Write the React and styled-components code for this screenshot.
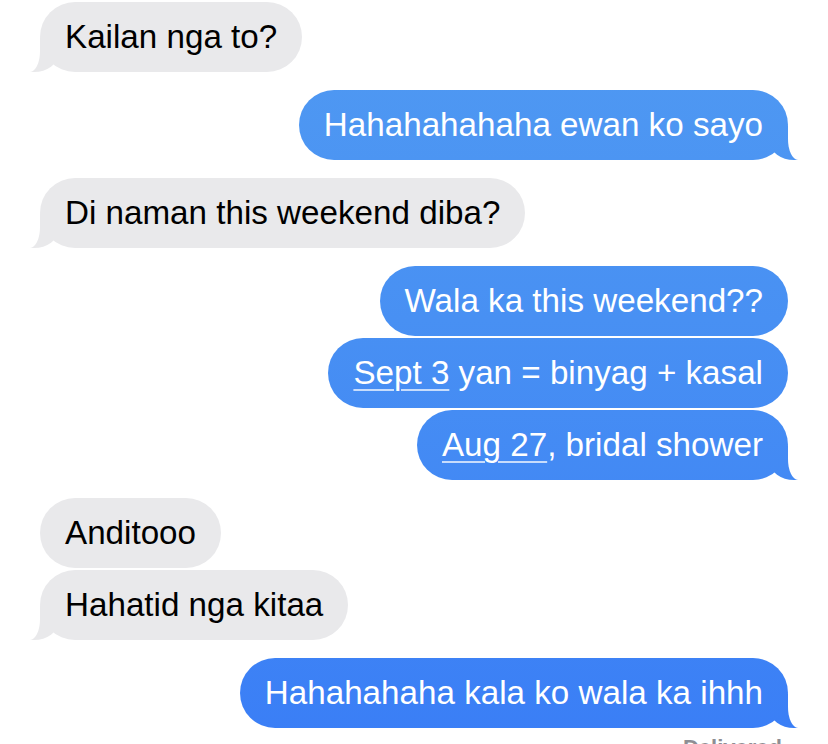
import React from "react";
import styled, { createGlobalStyle, css } from "styled-components";

const GlobalStyle = createGlobalStyle`
  html, body {
    margin: 0;
    background: #ffffff;
    overflow: hidden;
  }
`;

const BLUE = "linear-gradient(180deg, #509af2 0px, #4890f3 320px, #3a7ef6 744px) fixed";
const GREY = "#e9e9eb";

const Thread = styled.main`
  display: flex;
  flex-direction: column;
  gap: 18px;
  padding: 2px 40px 0;
  font-family: "Liberation Sans", Arial, sans-serif;
`;

const Group = styled.section`
  display: flex;
  flex-direction: column;
  gap: 2px;
  align-items: ${(p) => (p.$sent ? "flex-end" : "flex-start")};
`;

const sentTail = css`
  &::before {
    right: -12px;
    border-bottom-left-radius: 24px 18px;
    background: ${BLUE};
  }
  &::after {
    left: 100%;
    border-bottom-left-radius: 10px 21px;
  }
`;

const receivedTail = css`
  &::before {
    left: -12px;
    border-bottom-right-radius: 24px 18px;
    background: ${GREY};
  }
  &::after {
    right: 100%;
    border-bottom-right-radius: 10px 21px;
  }
`;

const Bubble = styled.div`
  position: relative;
  z-index: 0;
  height: 70px;
  padding: 0 25px;
  border-radius: 35px;
  font-size: 33.2px;
  line-height: 70px;
  white-space: nowrap;
  color: ${(p) => (p.$sent ? "#ffffff" : "#000000")};
  background: ${(p) => (p.$sent ? BLUE : GREY)};

  ${(p) =>
    p.$tail &&
    css`
      &::before,
      &::after {
        content: "";
        position: absolute;
        bottom: 0;
        z-index: -1;
      }
      &::before {
        width: 30px;
        height: 34px;
      }
      &::after {
        width: 20px;
        height: 40px;
        background: #ffffff;
      }
      ${p.$sent ? sentTail : receivedTail}
    `}
`;

const DataLink = styled.span`
  text-decoration: underline;
  text-decoration-color: rgba(255, 255, 255, 0.7);
  text-decoration-thickness: 2px;
  text-underline-offset: 5px;
`;

const Status = styled.div`
  margin-top: 5px;
  padding-right: 6px;
  font-size: 22px;
  line-height: 26px;
  font-weight: 600;
  color: #8e8e93;
`;

const groups = [
  { sent: false, items: ["Kailan nga to?"] },
  { sent: true, items: ["Hahahahahaha ewan ko sayo"] },
  { sent: false, items: ["Di naman this weekend diba?"] },
  {
    sent: true,
    items: [
      "Wala ka this weekend??",
      <>
        <DataLink>Sept 3</DataLink> yan = binyag + kasal
      </>,
      <>
        <DataLink>Aug 27</DataLink>, bridal shower
      </>,
    ],
  },
  { sent: false, items: ["Anditooo", "Hahatid nga kitaa"] },
  { sent: true, items: ["Hahahahaha kala ko wala ka ihhh"], status: "Delivered" },
];

export default function App() {
  return (
    <>
      <GlobalStyle />
      <Thread>
        {groups.map((g, i) => (
          <Group key={i} $sent={g.sent}>
            {g.items.map((text, j) => (
              <Bubble key={j} $sent={g.sent} $tail={j === g.items.length - 1}>
                {text}
              </Bubble>
            ))}
            {g.status && <Status>{g.status}</Status>}
          </Group>
        ))}
      </Thread>
    </>
  );
}
